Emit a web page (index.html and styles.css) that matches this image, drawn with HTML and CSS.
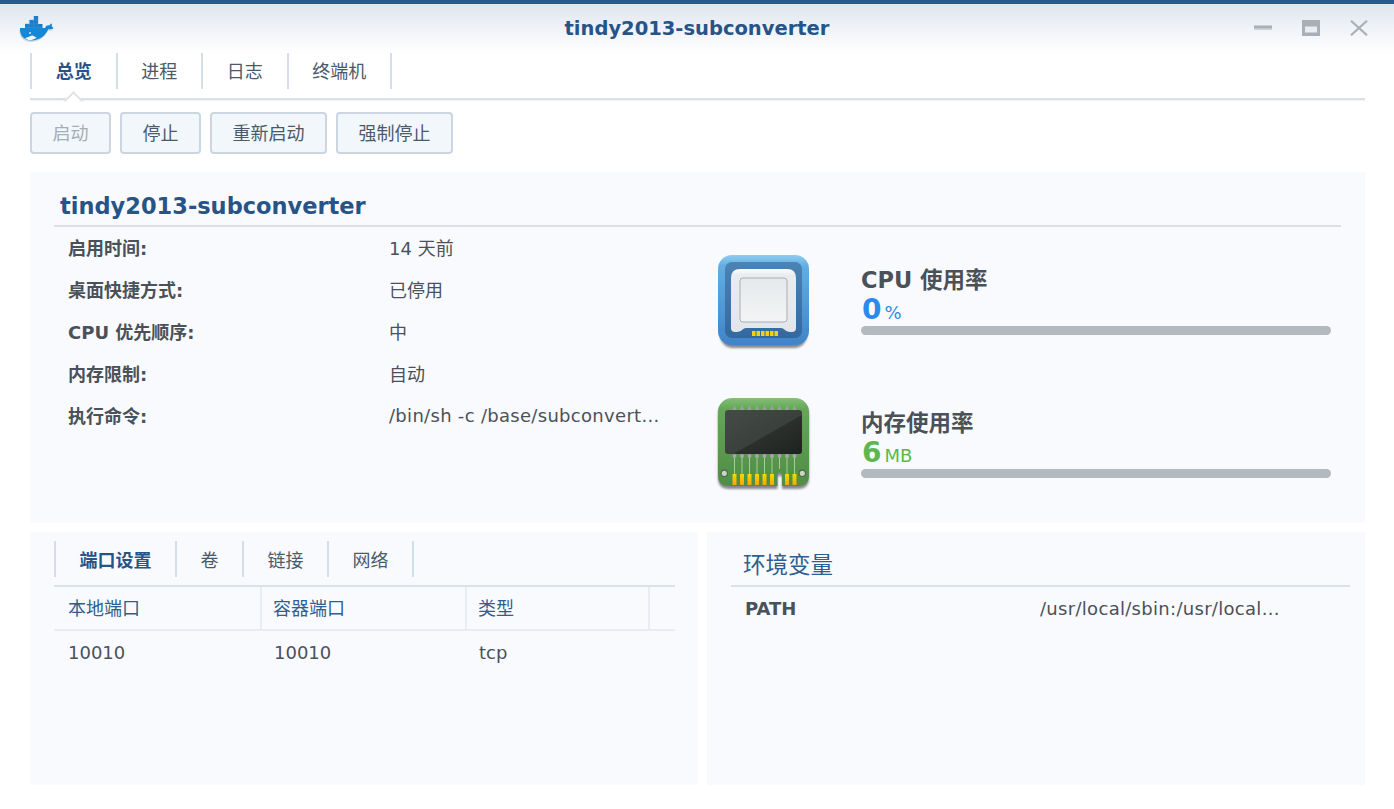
FILE: index.html
```html
<!DOCTYPE html>
<html lang="zh-CN">
<head>
<meta charset="utf-8">
<title>tindy2013-subconverter</title>
<link rel="stylesheet" href="styles.css">
</head>
<body>
<div class="window">
  <header class="titlebar">
    <svg class="logo" width="36" height="28" viewBox="0 0 36 28">
      <path d="M2 13.500h25c1-2.500 3-3 4.500-2.500 .5-1.500 1.500-2 2-2 .3 1 .8 2 .3 3 1 .5 1.500 1.200 1.700 1.800-1.500 1-3.500 1.200-5 .7C27.500 21 22 26 13 26 6 26 1.500 21 2 13.500z" fill="#d3d8de" transform="translate(-.6 1.100)"/>
      <path d="M2 13h25c1-2.500 3-3 4.500-2.500 .5-1.500 1.500-2 2-2 .3 1 .8 2 .3 3 1 .5 1.500 1.200 1.700 1.800-1.500 1-3.500 1.200-5 .7C27.500 20.500 22 25.500 13 25.500 6 25.500 1.500 20.500 2 13z" fill="#1488d8"/>
      <path d="M7 23c3-.2 5-2.500 7-2.600 2 0 3 1.800 5 2.200-2 1.600-4.500 2.500-7 2.600-2 0-3.500-.9-5-2.200z" fill="#eef5fa"/>
      <path d="M7 9h17.500v4H7zM11.500 5H20v4h-8.500zM16 1h4v4h-4z" fill="#1c7cc6"/>
      <path d="M7 12.600h17.500M7 8.900h13M11.500 5h8.500M11.400 5v8M15.700 1v12M20.100 1v12" stroke="#4d9fd9" stroke-width=".4" fill="none"/>
      <circle cx="12" cy="18" r="1" fill="#cfe6f6"/>
    </svg>
    <h1 class="window-title">tindy2013-subconverter</h1>
    <div class="controls">
      <svg width="18" height="16" viewBox="0 0 18 16"><rect y="5.500" width="18" height="4" fill="#a9afb6"/><rect y="8" width="18" height="1" fill="#c3c8cd"/></svg>
      <svg width="18" height="16" viewBox="0 0 18 16"><path d="M0 0h18v16H0z" fill="#a9afb6"/><rect x="3" y="6.500" width="12" height="6" fill="#e9edf2"/></svg>
      <svg width="18" height="16" viewBox="0 0 18 16"><path d="M1 .8L17 15.200M17 .8L1 15.200" stroke="#a9afb6" stroke-width="2.200" fill="none"/></svg>
    </div>
  </header>

  <nav class="main-tabs">
    <a class="tab active">总览</a>
    <a class="tab">进程</a>
    <a class="tab">日志</a>
    <a class="tab">终端机</a>
  </nav>

  <div class="toolbar">
    <button class="btn disabled">启动</button>
    <button class="btn">停止</button>
    <button class="btn">重新启动</button>
    <button class="btn">强制停止</button>
  </div>

  <section class="panel overview">
    <h2 class="name">tindy2013-subconverter</h2>
    <div class="overview-body">
      <dl class="info">
        <div class="row"><dt>启用时间:</dt><dd>14 天前</dd></div>
        <div class="row"><dt>桌面快捷方式:</dt><dd>已停用</dd></div>
        <div class="row"><dt>CPU 优先顺序:</dt><dd>中</dd></div>
        <div class="row"><dt>内存限制:</dt><dd>自动</dd></div>
        <div class="row"><dt>执行命令:</dt><dd class="spaced">/bin/sh -c /base/subconvert...</dd></div>
      </dl>
      <div class="stats">
        <div class="stat">
          <svg class="stat-icon" width="100" height="100" viewBox="0 0 100 100">
            <defs>
              <linearGradient id="cpuOuter" x1="0" y1="0" x2="0" y2="1"><stop offset="0" stop-color="#8fcdf2"/><stop offset=".12" stop-color="#62aee3"/><stop offset="1" stop-color="#3f84c8"/></linearGradient>
              <linearGradient id="cpuInner" x1="0" y1="0" x2="0" y2="1"><stop offset="0" stop-color="#4a83b4"/><stop offset="1" stop-color="#33699f"/></linearGradient>
              <linearGradient id="cpuChip" x1="0" y1="0" x2="0" y2="1"><stop offset="0" stop-color="#fbfcfc"/><stop offset=".1" stop-color="#e9ecef"/><stop offset="1" stop-color="#e2e6ea"/></linearGradient>
              <linearGradient id="cpuCore" x1="0" y1="0" x2="0" y2="1"><stop offset="0" stop-color="#e6e9eb"/><stop offset="1" stop-color="#f2f4f5"/></linearGradient>
              <filter id="soft" x="-10%" y="-10%" width="120%" height="120%"><feGaussianBlur stdDeviation="1.200"/></filter>
            </defs>
            <rect x="7" y="8" width="87" height="90" rx="13" fill="#55595d" opacity=".7" filter="url(#soft)"/>
            <rect x="5" y="5" width="91" height="90" rx="14" fill="url(#cpuOuter)"/>
            <rect x="12" y="12" width="77" height="76" rx="7" fill="url(#cpuInner)"/>
            <path d="M27 19h47q9 0 9 9v50q0 4-4 4-5 0-7-2-2-2-4-2H33q-2 0-4 2-2 2-7 2-4 0-4-4V28q0-9 9-9z" fill="url(#cpuChip)"/>
            <rect x="27" y="28" width="47" height="44" rx="3" fill="url(#cpuCore)" stroke="#a9aeb3" stroke-width="1"/>
            <path d="M39 81h3.500v5H39zM43.500 81H47v5h-3.500zM48 81h3.500v5H48zM52.500 81H56v5h-3.500zM57 81h3.500v5H57zM61.500 81H65v5h-3.500z" fill="#f0d40a"/>
          </svg>
          <div class="stat-text">
            <div class="stat-title">CPU 使用率</div>
            <div class="stat-value blue"><b>0</b><span>%</span></div>
            <div class="bar"></div>
          </div>
        </div>
        <div class="stat">
          <svg class="stat-icon" width="100" height="100" viewBox="0 0 100 100">
            <defs>
              <linearGradient id="ramOuter" x1="0" y1="0" x2="0" y2="1"><stop offset="0" stop-color="#84c076"/><stop offset=".12" stop-color="#65a659"/><stop offset="1" stop-color="#4f8d45"/></linearGradient>
              <linearGradient id="ramChip" x1="0" y1="0" x2="1" y2="1"><stop offset="0" stop-color="#454b47"/><stop offset=".55" stop-color="#3a403c"/><stop offset=".56" stop-color="#2b302d"/><stop offset="1" stop-color="#1d2220"/></linearGradient>
              <linearGradient id="gold" x1="0" y1="0" x2="0" y2="1"><stop offset="0" stop-color="#ffd400"/><stop offset="1" stop-color="#f2a900"/></linearGradient>
            </defs>
            <path d="M19 5h63a14 14 0 0 1 14 14v63q0 11-11 11H69V82q0-2.500-2.200-2.500T64.500 82v11H16q-11 0-11-11V19A14 14 0 0 1 19 5z" fill="#55595d" opacity=".7" filter="url(#soft)" transform="translate(0 3)"/>
            <path d="M19 5h63a14 14 0 0 1 14 14v63q0 11-11 11H69V82q0-2.500-2.200-2.500T64.500 82v11H16q-11 0-11-11V19A14 14 0 0 1 19 5z" fill="url(#ramOuter)"/>
            <g fill="#9aa09c">
              <path d="M19.500 17l2-5.500 2 5.500zM27 17l2-5.500 2 5.500zM34.500 17l2-5.500 2 5.500zM42 17l2-5.500 2 5.500zM49.500 17l2-5.500 2 5.500zM57 17l2-5.500 2 5.500zM64.500 17l2-5.500 2 5.500zM72 17l2-5.500 2 5.500zM79.500 17l2-5.500 2 5.500z"/>
            </g>
            <rect x="12" y="17" width="77" height="44" rx="3" fill="url(#ramChip)"/>
            <path d="M21.500 62v20M29 62v20M36.500 62v20M44 62v20M51.500 62v20M59 62v20M66.500 62v14M74 62v20M81.500 62v20" stroke="#a6cc9b" stroke-width="1" fill="none"/>
            <g fill="#a2a8a4">
              <circle cx="21.500" cy="63" r="2"/><circle cx="29" cy="63" r="2"/><circle cx="36.500" cy="63" r="2"/><circle cx="44" cy="63" r="2"/><circle cx="51.500" cy="63" r="2"/><circle cx="59" cy="63" r="2"/><circle cx="66.500" cy="63" r="2"/><circle cx="74" cy="63" r="2"/><circle cx="81.500" cy="63" r="2"/>
            </g>
            <g fill="url(#gold)">
              <rect x="19.500" y="81" width="4" height="11"/><rect x="27" y="81" width="4" height="11"/><rect x="34.500" y="81" width="4" height="11"/><rect x="42" y="81" width="4" height="11"/><rect x="49.500" y="81" width="4" height="11"/><rect x="57" y="81" width="4" height="11"/><rect x="72" y="81" width="4" height="11"/><rect x="79.500" y="81" width="4" height="11"/>
            </g>
            <circle cx="11.300" cy="80.300" r="3.200" fill="#c6d8c0" stroke="#55604f" stroke-width="1.200"/>
            <circle cx="89.300" cy="80.300" r="3.200" fill="#c6d8c0" stroke="#55604f" stroke-width="1.200"/>
          </svg>
          <div class="stat-text">
            <div class="stat-title">内存使用率</div>
            <div class="stat-value green"><b>6</b><span>MB</span></div>
            <div class="bar"></div>
          </div>
        </div>
      </div>
    </div>
  </section>

  <div class="bottom">
    <section class="panel ports">
      <nav class="sub-tabs">
        <a class="subtab active">端口设置</a>
        <a class="subtab">卷</a>
        <a class="subtab">链接</a>
        <a class="subtab">网络</a>
      </nav>
      <div class="grid head">
        <div>本地端口</div><div>容器端口</div><div>类型</div><div></div>
      </div>
      <div class="grid body">
        <div>10010</div><div>10010</div><div>tcp</div><div></div>
      </div>
    </section>
    <section class="panel env">
      <h3 class="env-title">环境变量</h3>
      <div class="env-row"><span class="env-key">PATH</span><span class="env-value spaced">/usr/local/sbin:/usr/local...</span></div>
    </section>
  </div>
</div>
</body>
</html>
```
FILE: styles.css
```css
* { box-sizing: border-box; }
html, body { margin: 0; padding: 0; background: #fff; }
body {
  width: 1394px;
  height: 809px;
  overflow: hidden;
  font-family: "DejaVu Sans", "Noto Sans CJK SC", sans-serif;
  color: #4a5158;
}
.window { display: flex; flex-direction: column; height: 809px; border-top: 4px solid #2a5a8e; }

.titlebar {
  height: 49px;
  flex: none;
  display: flex;
  align-items: center;
  justify-content: center;
  background: linear-gradient(#e0e6ef, #fff);
  position: relative;
}
.logo { position: absolute; left: 18px; top: 11px; }
.window-title { margin: 0; font-size: 19.500px; font-weight: 700; color: #275487; line-height: 48px; }
.controls { position: absolute; left: 1254px; top: 16px; display: flex; gap: 30px; align-items: center; }

.main-tabs {
  margin: 0 29px 0 30px;
  height: 47px;
  display: flex;
  border-bottom: 2px solid #dcdfe3;
  box-shadow: 0 1px 0 #f1f2f4;
  flex: none;
}
.main-tabs::before { content: ""; width: 2px; height: 36px; background: #d3deea; flex: none; }
.tab {
  height: 36px;
  padding: 0 23.750px;
  font-size: 18px;
  line-height: 34px;
  color: #4a5a6a;
  border-right: 2px solid #d3deea;
  font-family: "Noto Sans CJK SC", sans-serif;
}
.tab.active { color: #275487; font-weight: 700; position: relative; }
.tab.active::after {
  content: "";
  position: absolute;
  left: 34px;
  top: 40.500px;
  width: 13px;
  height: 13px;
  background: #fff;
  border-left: 2px solid #dcdfe3;
  border-top: 2px solid #dcdfe3;
  clip-path: polygon(0 0, 100% 0, 0 100%);
  transform: rotate(45deg);
}

.toolbar { display: flex; gap: 9px; margin: 12px 0 18px 30px; flex: none; }
.btn {
  height: 42px;
  padding: 0 20.500px 2px;
  font: 18px/36px "Noto Sans CJK SC", sans-serif;
  color: #4a5a6a;
  background: #f2f7fb;
  border: 2px solid #cbd6e2;
  border-radius: 4px;
}
.btn.disabled { color: #a6aeb6; }

.panel { background: #f9fafe; }
.overview { margin: 0 29px 0 30px; height: 351px; flex: none; padding: 0 24px; }
.name {
  margin: 0;
  height: 55px;
  padding: 16px 0 0 6px;
  font-size: 22.500px;
  line-height: 36px;
  color: #275487;
  font-weight: 700;
  border-bottom: 2px solid #dcdfe4;
}
.overview-body { display: flex; }
.info { margin: 0; width: 659px; flex: none; padding-left: 14px; font-size: 18px; }
.row { display: flex; height: 42px; align-items: center; padding-bottom: 2px; }
.row dt { width: 321px; flex: none; font-weight: 700; }
.row dd { margin: 0; white-space: nowrap; }
.spaced { letter-spacing: .300px; }
.stats { flex: 1; padding-top: 23px; display: flex; flex-direction: column; gap: 43px; }
.stat { display: flex; height: 100px; }
.stat-icon { flex: none; }
.stat-text { margin-left: 48px; width: 470px; padding-top: 16px; }
.stat-title { font-size: 22.500px; font-weight: 700; line-height: 29px; color: #4a5158; }
.stat-value { height: 30px; line-height: 30px; display: flex; align-items: baseline; padding-left: 1px; }
.stat-value b { font-size: 28px; font-weight: 700; }
.stat-value span { font-size: 18px; margin-left: 3px; }
.blue { color: #2d8ae8; }
.green { color: #5cb84d; }
.bar { height: 9px; border-radius: 5px; background: #b3babf; margin-top: 1px; }

.bottom { display: flex; gap: 9px; margin: 9px 29px 0 30px; height: 253px; flex: none; }
.ports { width: 668px; flex: none; padding: 9px 23px 0 24px; }
.sub-tabs { display: flex; height: 46px; border-bottom: 2px solid #d7e2ec; }
.sub-tabs::before { content: ""; width: 2px; height: 36px; background: #d3deea; flex: none; }
.subtab {
  height: 36px;
  padding: 0 23.500px;
  line-height: 36px;
  font-size: 18px;
  border-right: 2px solid #d3deea;
  font-family: "Noto Sans CJK SC", sans-serif;
  color: #4a5a6a;
}
.subtab.active { color: #275487; font-weight: 700; }
.grid { display: grid; grid-template-columns: 208px 205px 183px 1fr; font-size: 18px; }
.grid > div { padding-left: 12px; }
.grid > div:first-child { padding-left: 14px; }
.head { height: 44px; line-height: 44px; border-bottom: 2px solid #e8edf2; color: #2f5e90; }
.head > div { border-right: 2px solid #e8edf2; padding-left: 11px; }
.head > div:last-child { border-right: 0; }
.body { line-height: 44px; }
.env { flex: 1; padding: 9px 15px 0 24px; }
.env-title {
  margin: 0;
  height: 46px;
  padding: 7px 0 0 12px;
  font-size: 22.500px;
  line-height: 30px;
  font-weight: 400;
  color: #2f5e90;
  border-bottom: 2px solid #d7e2ec;
  font-family: "Noto Sans CJK SC", sans-serif;
}
.env-row { display: flex; height: 44px; line-height: 44px; font-size: 18px; padding-left: 14px; }
.env-key { width: 295px; font-weight: 700; }
```
